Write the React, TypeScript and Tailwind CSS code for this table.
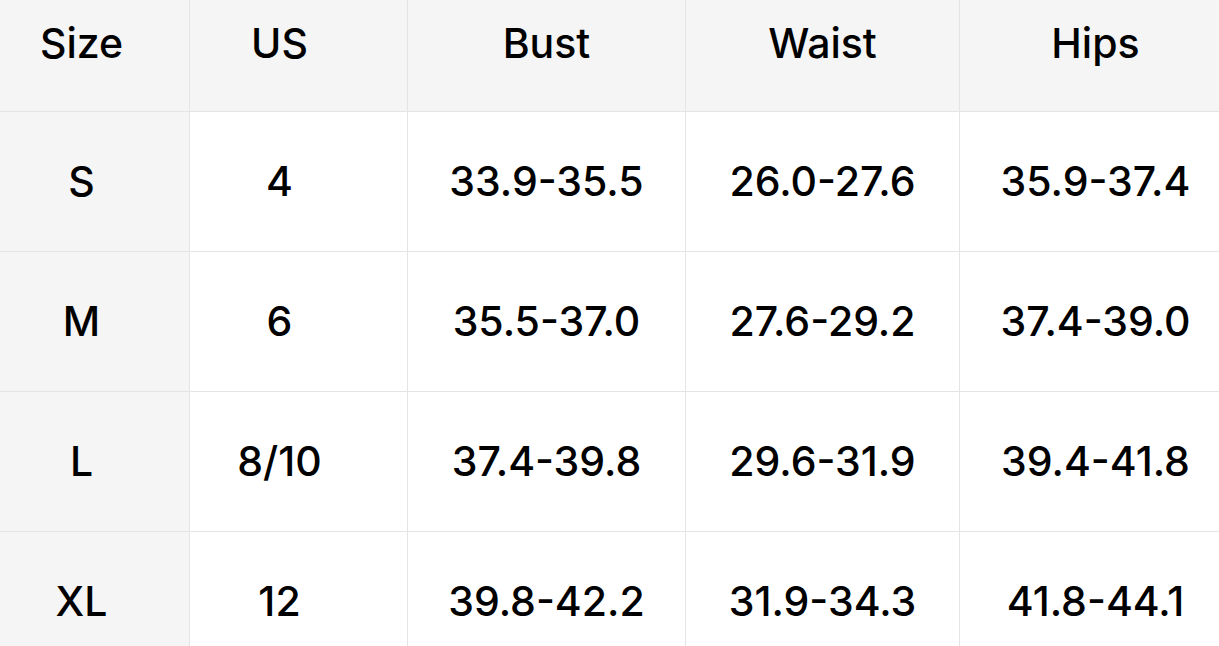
const headers = ['Size', 'US', 'Bust', 'Waist', 'Hips'];

const rows = [
  ['S', '4', '33.9-35.5', '26.0-27.6', '35.9-37.4'],
  ['M', '6', '35.5-37.0', '27.6-29.2', '37.4-39.0'],
  ['L', '8/10', '37.4-39.8', '29.6-31.9', '39.4-41.8'],
  ['XL', '12', '39.8-42.2', '31.9-34.3', '41.8-44.1'],
];

// per-column padding so the text sits where it does in the shot
const colPad = ['pr-[26px]', 'pr-[38px]', '', '', ''];

export default function App() {
  return (
    <div
      className="w-[1219px] h-[646px] overflow-hidden bg-white text-black antialiased"
      style={{ fontFamily: 'Inter, "Noto Sans", sans-serif' }}
    >
      <div className="grid grid-cols-[190px_218px_278px_274px_272px] w-[1232px]">
        {headers.map((h, i) => (
          <div
            key={h}
            className={`h-[112px] flex items-center justify-center pb-[24px] bg-[#f5f5f5] border-b border-r border-[#e4e4e4] text-[41px] font-medium ${colPad[i]}`}
          >
            {h}
          </div>
        ))}
        {rows.map((r) =>
          r.map((cell, i) => (
            <div
              key={r[0] + i}
              className={`h-[140px] flex items-center justify-center border-b border-r border-[#e4e4e4] text-[41px] font-medium ${
                i === 0 ? 'bg-[#f5f5f5]' : 'bg-white'
              } ${colPad[i]}`}
            >
              {cell}
            </div>
          ))
        )}
      </div>
    </div>
  );
}
